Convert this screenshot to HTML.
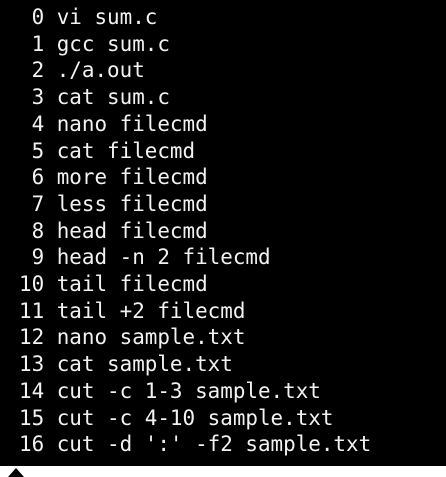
<!DOCTYPE html>
<html><head><style>
html,body{margin:0;padding:0;width:446px;height:477px;background:#fff;overflow:hidden}
.t{position:absolute;left:0;top:0;width:446px;height:466px;background:#000}
pre{position:absolute;left:19px;top:4px;margin:0;font-family:"DejaVu Sans Mono",monospace;font-size:20.9px;line-height:26.7px;color:#f2f2f2}
.tri{position:absolute;left:8px;top:468px;width:0;height:0;border-left:8px solid transparent;border-right:8px solid transparent;border-bottom:9px solid #000}
</style></head><body>
<div class="t"><pre> 0 vi sum.c
 1 gcc sum.c
 2 ./a.out
 3 cat sum.c
 4 nano filecmd
 5 cat filecmd
 6 more filecmd
 7 less filecmd
 8 head filecmd
 9 head -n 2 filecmd
10 tail filecmd
11 tail +2 filecmd
12 nano sample.txt
13 cat sample.txt
14 cut -c 1-3 sample.txt
15 cut -c 4-10 sample.txt
16 cut -d ':' -f2 sample.txt</pre></div>
<div class="tri"></div>
</body></html>
